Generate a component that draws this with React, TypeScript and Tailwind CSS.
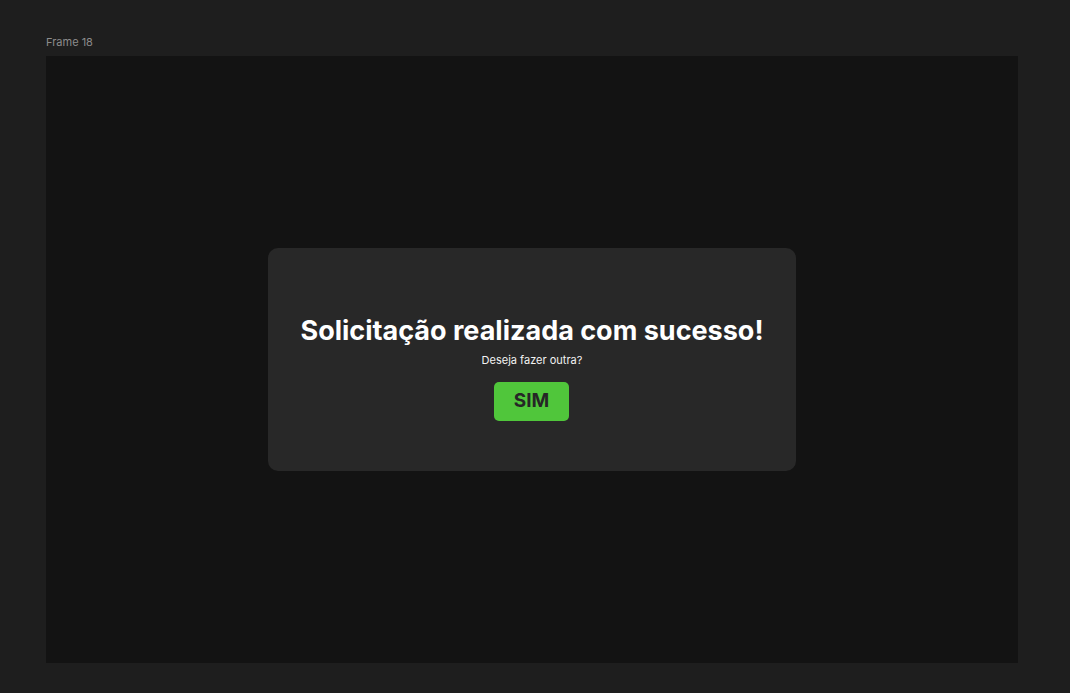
export default function App() {
  return (
    <div
      className="h-[693px] w-full overflow-hidden bg-[#1e1e1e] pt-[35px]"
      style={{ fontFamily: 'Inter, "Noto Sans", sans-serif' }}
    >
      <div className="ml-[46px] mb-[7px] h-[14px] text-[11px] leading-[14px] text-[#8c8c8c]">
        Frame 18
      </div>
      <div className="ml-[46px] flex h-[607px] w-[972px] items-center justify-center bg-[#131313]">
        <div className="flex h-[223px] w-[528px] flex-col items-center rounded-[10px] bg-[#282828] pt-[66px]">
          <h1 className="text-[27px] font-bold leading-[34px] text-white">
            Solicitação realizada com sucesso!
          </h1>
          <p className="mt-[5px] text-[11px] leading-[14px] text-[#f2f2f2]">
            Deseja fazer outra?
          </p>
          <button className="mt-[15px] mr-[1px] flex h-[39px] w-[75px] items-center justify-center rounded-[5px] bg-[#50c63b] text-[19px] font-bold text-[#262626]">
            SIM
          </button>
        </div>
      </div>
    </div>
  )
}
